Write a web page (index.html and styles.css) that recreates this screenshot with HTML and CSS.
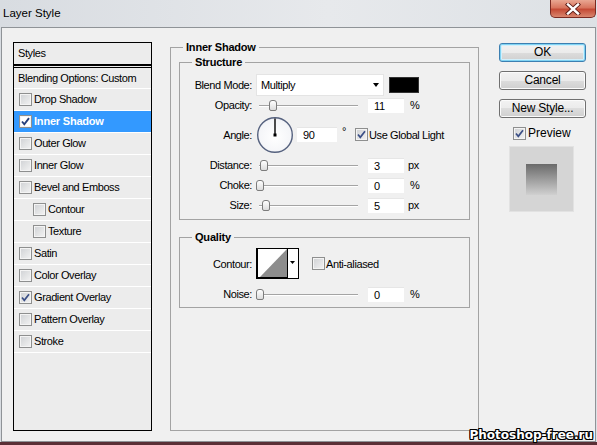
FILE: index.html
```html
<!DOCTYPE html>
<html>
<head>
<meta charset="utf-8">
<title>Layer Style</title>
<link rel="stylesheet" href="styles.css">
</head>
<body>
<div class="win">
  <div class="titlebar">
    <span class="title">Layer Style</span>
    <div class="close">
      <svg width="16" height="12" viewBox="0 0 16 12">
        <path d="M3 1.5 L13 10.5 M13 1.5 L3 10.5" stroke="#5a1a14" stroke-width="4.2" stroke-linecap="square"/>
        <path d="M3 1.5 L13 10.5 M13 1.5 L3 10.5" stroke="#ffffff" stroke-width="2.4" stroke-linecap="square"/>
      </svg>
    </div>
  </div>
  <div class="client">
    <div class="list">
      <div class="list-head">Styles</div>
      <div class="list-sep"></div>
      <div class="list-blend">Blending Options: Custom</div>
      <div class="item"><span class="cb"></span><span class="txt">Drop Shadow</span></div>
      <div class="item sel"><span class="cb"><svg width="11" height="11" viewBox="0 0 11 11"><path d="M2 5.5 L4.3 8.3 L9 2.2" fill="none" stroke="#263f7c" stroke-width="1.9"/></svg></span><span class="txt">Inner Shadow</span></div>
      <div class="item"><span class="cb"></span><span class="txt">Outer Glow</span></div>
      <div class="item"><span class="cb"></span><span class="txt">Inner Glow</span></div>
      <div class="item"><span class="cb"></span><span class="txt">Bevel and Emboss</span></div>
      <div class="item sub"><span class="cb"></span><span class="txt">Contour</span></div>
      <div class="item sub"><span class="cb"></span><span class="txt">Texture</span></div>
      <div class="item"><span class="cb"></span><span class="txt">Satin</span></div>
      <div class="item"><span class="cb"></span><span class="txt">Color Overlay</span></div>
      <div class="item"><span class="cb"><svg width="11" height="11" viewBox="0 0 11 11"><path d="M2 5.5 L4.3 8.3 L9 2.2" fill="none" stroke="#3b4f86" stroke-width="1.7"/></svg></span><span class="txt">Gradient Overlay</span></div>
      <div class="item"><span class="cb"></span><span class="txt">Pattern Overlay</span></div>
      <div class="item"><span class="cb"></span><span class="txt">Stroke</span></div>
    </div>

    <div class="group outer">
      <div class="legend">Inner Shadow</div>
      <div class="group structure">
        <div class="legend">Structure</div>
        <div class="rows">
          <div class="row r-blend">
            <span class="lbl">Blend Mode:</span>
            <div class="select"><span>Multiply</span><span class="arrow"></span></div>
            <div class="swatch"></div>
          </div>
          <div class="row r-slide">
            <span class="lbl">Opacity:</span>
            <div class="slider"><div class="track"></div><div class="thumb" style="left:13px"></div></div>
            <div class="field">11</div><span class="unit pct">%</span>
          </div>
          <div class="row r-angle">
            <span class="lbl">Angle:</span>
            <svg class="dial" width="38" height="38" viewBox="0 0 38 38">
              <defs>
                <radialGradient id="ag" cx="50%" cy="55%" r="60%">
                  <stop offset="0" stop-color="#ffffff"/>
                  <stop offset="0.8" stop-color="#f4f5f8"/>
                  <stop offset="1" stop-color="#dfe3ec"/>
                </radialGradient>
              </defs>
              <circle cx="19" cy="19" r="17.3" fill="url(#ag)" stroke="#56627f" stroke-width="1.4"/>
              <line x1="19" y1="2.5" x2="19" y2="19" stroke="#000" stroke-width="1.4"/>
              <rect x="17.5" y="17.5" width="3" height="3" fill="#000"/>
            </svg>
            <div class="field angle-field">90</div>
            <span class="deg">°</span>
            <span class="cb on global"><svg width="11" height="11" viewBox="0 0 11 11"><path d="M2 5.5 L4.3 8.3 L9 2.2" fill="none" stroke="#3b4f86" stroke-width="1.7"/></svg></span>
            <span class="cbtxt">Use Global Light</span>
          </div>
          <div class="row r-slide2">
            <span class="lbl">Distance:</span>
            <div class="slider"><div class="track"></div><div class="thumb" style="left:4px"></div></div>
            <div class="field">3</div><span class="unit px">px</span>
          </div>
          <div class="row r-slide2">
            <span class="lbl">Choke:</span>
            <div class="slider"><div class="track"></div><div class="thumb" style="left:0px"></div></div>
            <div class="field">0</div><span class="unit pct">%</span>
          </div>
          <div class="row r-slide2">
            <span class="lbl">Size:</span>
            <div class="slider"><div class="track"></div><div class="thumb" style="left:6px"></div></div>
            <div class="field">5</div><span class="unit px">px</span>
          </div>
        </div>
      </div>

      <div class="group quality">
        <div class="legend">Quality</div>
        <div class="qrows">
          <div class="row r-contour">
            <span class="lbl">Contour:</span>
            <svg class="contour" width="43" height="31" viewBox="0 0 43 31">
              <rect x="0" y="0" width="43" height="31" fill="#000"/>
              <rect x="2" y="1" width="29" height="28" fill="#ffffff"/>
              <polygon points="4,29 31,1 31,29" fill="#8d8d8d"/>
              <rect x="32" y="1" width="10" height="29" fill="#ffffff"/>
              <polygon points="34,13 39,13 36.5,16" fill="#000"/>
            </svg>
            <span class="cb anti"></span>
            <span class="cbtxt">Anti-aliased</span>
          </div>
          <div class="row r-noise">
            <span class="lbl">Noise:</span>
            <div class="slider"><div class="track"></div><div class="thumb" style="left:0px"></div></div>
            <div class="field">0</div><span class="unit pct">%</span>
          </div>
        </div>
      </div>
    </div>

    <div class="side">
      <div class="btn default">OK</div>
      <div class="btn">Cancel</div>
      <div class="btn">New Style...</div>
      <div class="preview-row">
        <span class="cb"><svg width="11" height="11" viewBox="0 0 11 11"><path d="M2 5.5 L4.3 8.3 L9 2.2" fill="none" stroke="#3b4f86" stroke-width="1.7"/></svg></span>
        <span class="ptxt">Preview</span>
      </div>
      <div class="preview"><div class="preview-inner"></div></div>
    </div>
  </div>
</div>
<div class="watermark">Photoshop-free.ru</div>
</body>
</html>
```

FILE: styles.css
```css
* { box-sizing: border-box; }
html, body { margin: 0; padding: 0; }
body {
  width: 597px;
  height: 445px;
  overflow: hidden;
  position: relative;
  background: #5b2f36;
  font-family: "Liberation Sans", Arial, sans-serif;
  font-size: 11px;
  letter-spacing: -0.4px;
  color: #000;
}
.win {
  width: 597px;
  height: 442px;
  background: linear-gradient(to right, #d8dce1, #e7e9ec 55%, #dde1e5);
  display: flex;
  flex-direction: column;
}
.titlebar {
  height: 27px;
  flex: none;
  display: flex;
  align-items: flex-start;
}
.title {
  font-size: 11.5px;
  letter-spacing: 0;
  line-height: 26px;
  padding-left: 3px;
  color: #000;
}
.close {
  margin-left: auto;
  margin-right: 1px;
  width: 46px;
  height: 18px;
  border: 1px solid #7a2a22;
  border-top: none;
  border-radius: 0 0 5px 5px;
  background: linear-gradient(#e9a792, #d8755e 45%, #c44a35 55%, #d9866e);
  display: flex;
  align-items: center;
  justify-content: center;
}
.client {
  flex: 1;
  margin: 0 1px;
  border: 1px solid #8f9397;
  background: #f0f0f0;
  display: flex;
  align-items: flex-start;
  padding: 14px 0 0 11px;
}

/* styles list */
.list {
  flex: none;
  width: 139px;
  height: 389px;
  border: 1px solid #000;
  background: #ececec;
}
.list-head {
  height: 23px;
  line-height: 21px;
  padding-left: 4px;
  border-bottom: 2px solid #000;
}
.list-sep {
  height: 2px;
  border-bottom: 1px solid #000;
}
.list-blend {
  height: 21px;
  line-height: 20px;
  padding-left: 4px;
  border-bottom: 1px solid #fff;
}
.item {
  height: 22px;
  border-bottom: 1px solid #fff;
  display: flex;
  align-items: center;
  padding-left: 5px;
}
.item .txt { margin-left: 2px; line-height: 21px; }
.item.sub { padding-left: 19px; }
.item.sel { background: #3399ff; color: #fff; font-weight: bold; letter-spacing: -0.2px; }
.item.sel .cb { background: #fff; }

.cb {
  flex: none;
  width: 13px;
  height: 13px;
  border: 1px solid #8e8f8f;
  background: linear-gradient(135deg, #cfd1d4, #f3f3f3);
  box-shadow: inset 0 0 0 1px #f4f4f4;
  display: flex;
  align-items: center;
  justify-content: center;
}

/* group boxes */
.group { border: 1px solid #a3a3a3; }
.legend {
  width: max-content;
  height: 14px;
  line-height: 14px;
  margin: -8px 0 0 12px;
  padding: 0 3px;
  background: #f0f0f0;
  font-weight: bold;
  letter-spacing: -0.2px;
}
.outer {
  flex: none;
  width: 309px;
  height: 384px;
  margin: 5px 0 0 18px;
}
.structure {
  width: 291px;
  margin: 8px 0 0 8px;
}
.rows { margin-top: 5px; padding-bottom: 4px; }
.quality {
  width: 291px;
  margin: 17px 0 0 8px;
}
.qrows { margin-top: 4px; padding-bottom: 4px; }

.row { display: flex; align-items: center; }
.lbl { flex: none; width: 72px; margin-right: 4px; text-align: right; }
.r-blend { height: 22px; }
.r-slide { height: 18px; }
.r-angle { height: 41px; }
.r-slide2 { height: 20px; }
.r-contour { height: 31px; }
.r-noise { height: 18px; margin-top: 6px; }

.select {
  flex: none;
  width: 128px;
  height: 22px;
  background: #fff;
  border: 1px solid #e4e4e4;
  display: flex;
  align-items: center;
  padding-left: 4px;
}
.arrow {
  margin-left: auto;
  margin-right: 4px;
  width: 0;
  height: 0;
  border-left: 3.5px solid transparent;
  border-right: 3.5px solid transparent;
  border-top: 4px solid #000;
}
.swatch {
  flex: none;
  width: 30px;
  height: 16px;
  margin-left: 5px;
  background: #000;
  border: 1px solid #333;
}

.slider {
  flex: none;
  position: relative;
  width: 112px;
  height: 18px;
}
.track {
  position: absolute;
  left: 3px;
  right: 10px;
  top: 9px;
  height: 2px;
  border-top: 1px solid #a4a4a4;
  border-bottom: 1px solid #fff;
}
.thumb {
  position: absolute;
  top: 4px;
  width: 8px;
  height: 11px;
  border: 1px solid #7c7c7c;
  border-radius: 3px 3px 2px 2px;
  background: linear-gradient(#ffffff, #dcdcdc);
}
.field {
  flex: none;
  width: 36px;
  height: 15px;
  line-height: 15px;
  padding-left: 6px;
  background: #fff;
  border-top: 1px solid #e6e6e6;
}
.unit.pct { margin-left: 6px; }
.unit.px { margin-left: 4px; }

.dial { flex: none; margin-left: 0; }
.angle-field { width: 40px; margin-left: 3px; }
.deg { margin-left: 5px; margin-bottom: 8px; }
.global { margin-left: 9px; }
.cbtxt { margin-left: 1px; }

.contour { flex: none; display: block; }
.anti { margin-left: 13px; }

/* right side */
.side {
  flex: none;
  width: 87px;
  margin: 1px 0 0 20px;
  display: flex;
  flex-direction: column;
}
.btn {
  height: 19px;
  margin-bottom: 9px;
  border: 1px solid #707070;
  border-radius: 3px;
  background: linear-gradient(#f2f2f2, #ebebeb 50%, #dddddd 50%, #cfcfcf);
  box-shadow: inset 0 0 0 1px #fbfbfb;
  text-align: center;
  line-height: 17px;
  font-size: 12px;
  letter-spacing: -0.2px;
}
.btn.default {
  border-color: #3c7fb1;
  box-shadow: inset 0 0 0 1px #7fd3f3, inset 0 0 0 2px #d2effb;
}
.preview-row {
  height: 14px;
  margin-top: -1px;
  padding-left: 14px;
  display: flex;
  align-items: center;
}
.ptxt { margin-left: 2px; font-size: 12px; letter-spacing: 0; }
.preview {
  width: 65px;
  height: 66px;
  margin: 6px 0 0 10px;
  background: #d5d5d5;
  border: 1px solid #e2e2e2;
  display: flex;
  align-items: center;
  justify-content: center;
}
.preview-inner {
  width: 31px;
  height: 31px;
  background: linear-gradient(#6a6a6a, #d0d0d0);
}

.watermark {
  position: absolute;
  right: 4px;
  bottom: 3px;
  font-family: "DejaVu Sans", Verdana, sans-serif;
  font-weight: bold;
  font-size: 12px;
  line-height: 14px;
  letter-spacing: 0;
  color: #fff;
  text-shadow: -1px -1px 0 #000, 1px -1px 0 #000, -1px 1px 0 #000, 1px 1px 0 #000,
               0 -1px 0 #000, 0 1px 0 #000, -1px 0 0 #000, 1px 0 0 #000;
}
```
